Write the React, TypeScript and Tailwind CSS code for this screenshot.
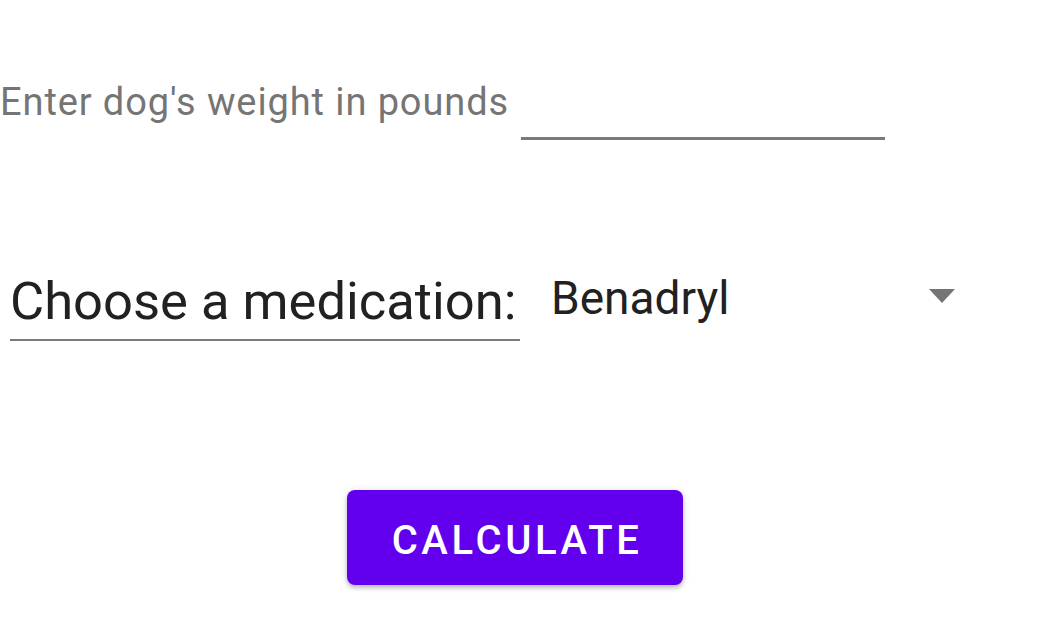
import React from "react";

export default function App() {
  return (
    <div
      className="w-[1056px] h-[624px] bg-white overflow-hidden flex flex-col"
      style={{ fontFamily: "Roboto, 'Noto Sans', sans-serif" }}
    >
      {/* Row 1: weight input */}
      <div className="mt-[83px] flex items-start">
        <span className="w-[508px] text-[38px] leading-none tracking-[0.9px] text-[#757575] whitespace-nowrap">
          Enter dog's weight in pounds
        </span>
        <div className="ml-[13px] w-[364px] h-[57px] border-b-[3px] border-[#7a7a7a]" />
      </div>

      {/* Row 2: medication select */}
      <div className="mt-[135px] flex items-start">
        <div className="ml-[10px] w-[510px] h-[66px] border-b-[2px] border-[#7a7a7a]">
          <span className="text-[52.5px] leading-none text-[#212121] whitespace-nowrap">
            Choose a medication:
          </span>
        </div>
        <div className="ml-[31px] w-[378px]">
          <span className="text-[46px] leading-none text-[#212121] whitespace-nowrap">
            Benadryl
          </span>
        </div>
        <svg width="26" height="14" viewBox="0 0 26 14" className="mt-[14px]">
          <polygon points="0,0 26,0 13,14" fill="#757575" />
        </svg>
      </div>

      {/* Button */}
      <div className="mt-[149px] flex">
        <button className="ml-[347px] w-[336px] h-[95px] pt-[6px] pl-[4px] rounded-[8px] bg-[#6200EE] text-white text-[40px] font-medium tracking-[0.09em] shadow-[0_3px_4px_rgba(0,0,0,0.2),0_1px_8px_rgba(0,0,0,0.12)] flex items-center justify-center">
          CALCULATE
        </button>
      </div>
    </div>
  );
}
